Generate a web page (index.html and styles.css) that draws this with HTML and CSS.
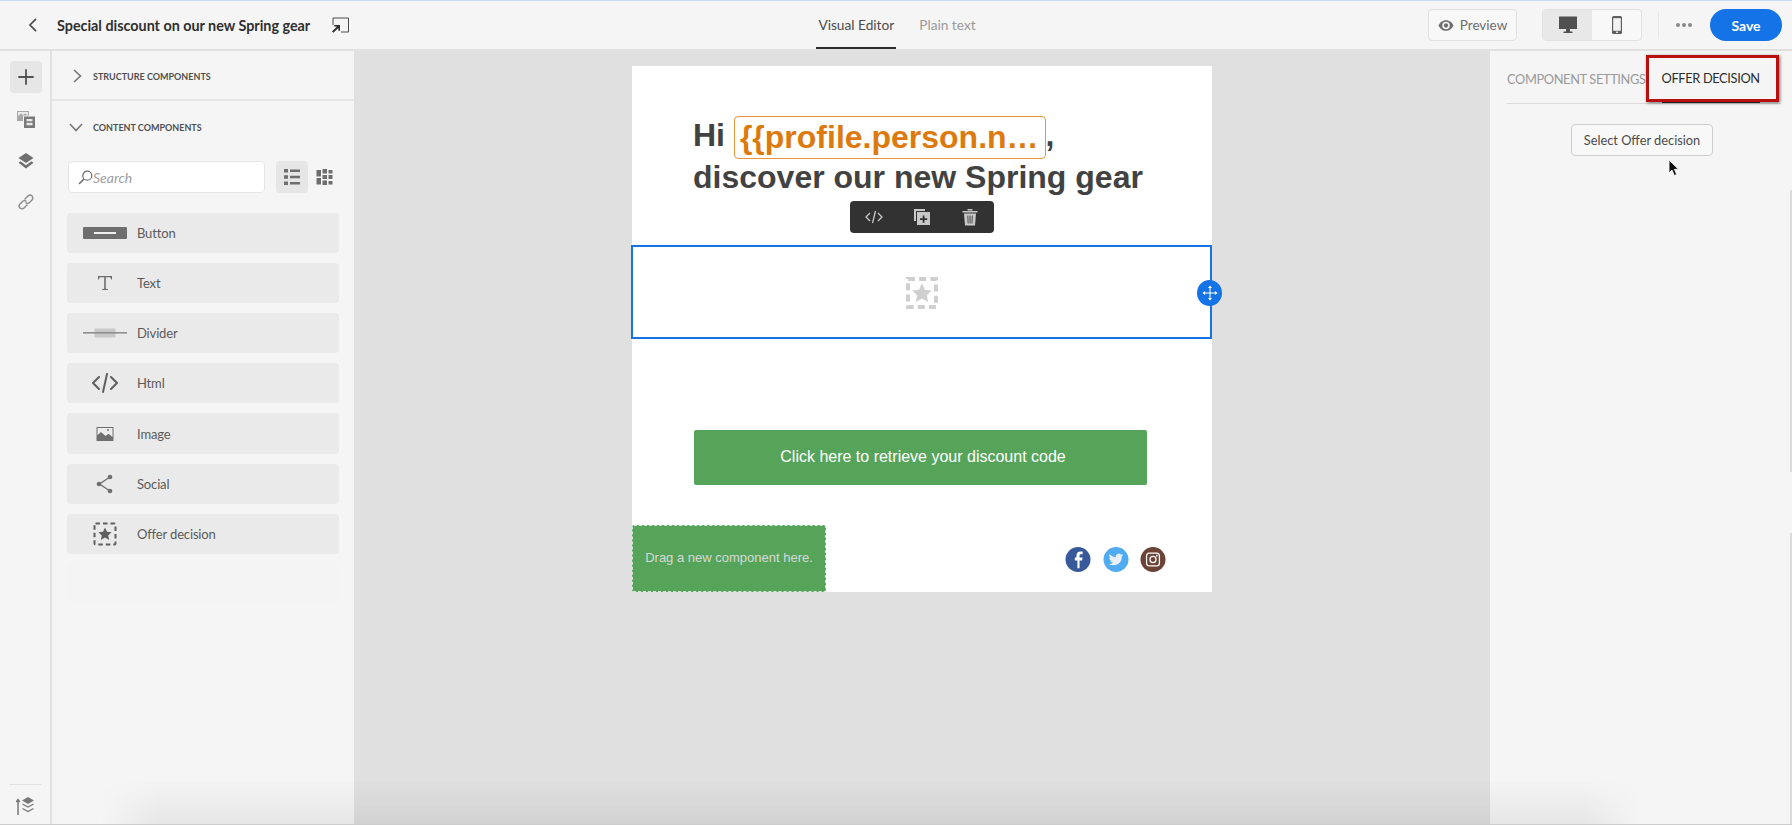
FILE: index.html
```html
<!DOCTYPE html>
<html lang="en">
<head>
<meta charset="utf-8">
<title>Special discount on our new Spring gear</title>
<link rel="stylesheet" href="styles.css">
</head>
<body>
<div class="app">
  <header class="topbar">
    <div class="top-left">
      <svg class="back" viewBox="0 0 10 16"><path d="M8.500 1.500 2 8l6.500 6.500" fill="none" stroke="#4b4b4b" stroke-width="2" stroke-linecap="round" stroke-linejoin="round"/></svg>
      <span class="title">Special discount on our new Spring gear</span>
      <svg class="open" viewBox="0 0 17 16"><path d="M1 8V1h15.500v14H9" fill="none" stroke="#4b4b4b" stroke-width="1"/><path d="M1.300 15.800 0 14.500l5-5H2.200V8H8v5.800H6.400V11z" fill="#2c2c2c"/></svg>
    </div>
    <nav class="modes">
      <span class="mode active">Visual Editor</span>
      <span class="mode">Plain text</span>
    </nav>
    <div class="top-right">
      <button class="btn preview">
        <svg class="eye" viewBox="0 0 18 14"><path d="M9 1C5 1 2 3.700.6 7 2 10.300 5 13 9 13s7-2.700 8.400-6C16 3.700 13 1 9 1zm0 10.200A4.200 4.200 0 1 1 9 2.800a4.200 4.200 0 0 1 0 8.400z" fill="#6e6e6e"/><circle cx="9" cy="7" r="2.400" fill="#6e6e6e"/></svg>
        Preview
      </button>
      <div class="devices">
        <span class="device on">
          <svg class="dev-icon" viewBox="0 0 18 18"><path d="M0 .5h18v12.500H0z" fill="#505050"/><path d="M7 13h4v2.500H7zM4.500 15.500h9V17h-9z" fill="#505050"/></svg>
        </span>
        <span class="device">
          <svg class="dev-icon" viewBox="0 0 18 18"><rect x="4" y="0" width="10" height="18" rx="1.500" fill="#606060"/><rect x="5.200" y="2.200" width="7.600" height="12.600" fill="#f2f2f2"/><rect x="8" y="15.600" width="2" height="1.300" fill="#f2f2f2"/></svg>
        </span>
      </div>
      <span class="sep"></span>
      <span class="more"><i></i><i></i><i></i></span>
      <button class="save">Save</button>
    </div>
  </header>

  <div class="main">
    <aside class="rail">
      <span class="rail-btn on">
        <svg class="rail-icon" viewBox="0 0 18 18"><path d="M9 2v14M2 9h14" stroke="#505050" stroke-width="1.800" stroke-linecap="round"/></svg>
      </span>
      <span class="rail-btn">
        <svg class="rail-icon" viewBox="0 0 18 18"><path d="M0 0h12v10H0z" fill="#a8a8a8"/><path d="M1 1h10v3.500L8 2.500 6 4 4 2.500 1 5z" fill="#ececec"/><path d="M6 4.500h12V17H6z" fill="#f5f5f5"/><path d="M7 5.500h11V17H7z" fill="#7a7a7a"/><path d="M9.500 8h6v2.300h-6zM9.500 11.800h6v2.500h-6z" fill="#e8e8e8"/></svg>
      </span>
      <span class="rail-btn">
        <svg class="rail-icon" viewBox="0 0 18 18"><path d="M9 1l7.500 5L9 11 1.500 6z" fill="#6e6e6e"/><path d="M3.500 9.300 1.500 10.800 9 16.500l7.500-5.700-2-1.500L9 13.300z" fill="#6e6e6e"/></svg>
      </span>
      <span class="rail-btn">
        <svg class="rail-icon" viewBox="0 0 18 18"><g fill="none" stroke="#8a8a8a" stroke-width="1.400"><path d="M7.500 6.500 11 3a2.800 2.800 0 0 1 4 4l-2.500 2.500a2.800 2.800 0 0 1-4 0"/><path d="M10.500 11.500 7 15a2.800 2.800 0 0 1-4-4l2.500-2.500a2.800 2.800 0 0 1 4 0"/></g></svg>
      </span>
      <span class="rail-fill"></span>
      <span class="rail-rule"></span>
      <svg class="rail-foot" viewBox="0 0 18 18"><path d="M2 18V4M.2 5 2 2.500 3.800 5" fill="none" stroke="#7a7a7a" stroke-width="1.500"/><path d="M12 0l6 3.500-6 3.500-6-3.500z" fill="#7a7a7a"/><path d="M6.500 7l5.500 3 5.500-3M6.500 11.500l5.500 3 5.500-3" fill="none" stroke="#7a7a7a" stroke-width="1.400"/></svg>
    </aside>

    <section class="panel">
      <div class="acc closed">
        <svg class="chev" viewBox="0 0 10 14"><path d="M2 1 8.500 7 2 13" fill="none" stroke="#7a7a7a" stroke-width="1.700"/></svg>
        <span class="acc-label">STRUCTURE COMPONENTS</span>
      </div>
      <div class="acc open-acc">
        <svg class="chev-d" viewBox="0 0 14 10"><path d="M1 2 7 8.500 13 2" fill="none" stroke="#7a7a7a" stroke-width="1.700"/></svg>
        <span class="acc-label">CONTENT COMPONENTS</span>
      </div>
      <div class="tools">
        <div class="search">
          <svg class="lens" viewBox="0 0 15 15"><circle cx="9.300" cy="5.700" r="4.500" fill="none" stroke="#6e6e6e" stroke-width="1.200"/><path d="M6 9 1 14" stroke="#6e6e6e" stroke-width="1.600"/></svg>
          <span>Search</span>
        </div>
        <span class="view on">
          <svg class="view-icon" viewBox="0 0 16 16"><path d="M0 0h4v3.500H0zM6 .5h10v2.500H6zM0 6.200h4v3.500H0zM6 6.700h10v2.500H6zM0 12.500h4V16H0zM6 13h10v2.500H6z" fill="#6e6e6e"/></svg>
        </span>
        <svg class="view-icon grid-icon" viewBox="0 0 16 16"><path d="M0 1h4.500v6.500H0zM0 9h4.500v6.500H0zM6 0h4.500v4.500H6zM6 6h4.500v4H6zM6 11.500h4.500V16H6zM12 1h4v3.500h-4zM12 6h4v4h-4zM12 12h4v3.500h-4z" fill="#6e6e6e"/></svg>
      </div>
      <ul class="items">
        <li class="item">
          <span class="item-icon"><svg class="ic-wide" viewBox="0 0 44 12"><rect width="44" height="12" rx="1" fill="#6e6e6e"/><rect x="11" y="5" width="22" height="2" fill="#f0f0f0"/></svg></span>
          <span>Button</span>
        </li>
        <li class="item">
          <span class="item-icon"><svg class="ic" viewBox="0 0 24 24"><path d="M5 8.500V5h14v3.500h-.9c-.1-1.500-.6-2.300-2-2.300h-3.300v11.600l2.200.5v.7H9v-.7l2.200-.5V6.200H7.900c-1.400 0-1.900.8-2 2.300z" fill="#6e6e6e"/></svg></span>
          <span>Text</span>
        </li>
        <li class="item">
          <span class="item-icon"><svg class="ic-wide" viewBox="0 0 44 12"><rect x="11.500" y="1.500" width="21" height="9" rx="1" fill="#c8c8c8"/><rect y="5" width="44" height="1.600" fill="#8e8e8e"/></svg></span>
          <span>Divider</span>
        </li>
        <li class="item">
          <span class="item-icon"><svg class="ic-code" viewBox="0 0 28 20"><path d="M8 4 2 10l6 6M20 4l6 6-6 6M16 1l-4 18" fill="none" stroke="#5f5f5f" stroke-width="2" stroke-linecap="round" stroke-linejoin="round"/></svg></span>
          <span>Html</span>
        </li>
        <li class="item tall">
          <span class="item-icon"><svg class="ic" viewBox="0 0 24 24"><path d="M3.500 5h17v14h-17z" fill="#6e6e6e"/><path d="M4.500 6h15v9l-4-3.200-3 2.200-4.500-4-3.500 3.300z" fill="#ececec"/><circle cx="15" cy="8" r="1" fill="#6e6e6e"/></svg></span>
          <span>Image</span>
        </li>
        <li class="item">
          <span class="item-icon"><svg class="ic" viewBox="0 0 24 24"><path d="M17 5 6.500 12 17 19" fill="none" stroke="#6e6e6e" stroke-width="1.300"/><circle cx="17" cy="5" r="2.300" fill="#6e6e6e"/><circle cx="6" cy="12" r="2.300" fill="#6e6e6e"/><circle cx="17" cy="19" r="2.300" fill="#6e6e6e"/></svg></span>
          <span>Social</span>
        </li>
        <li class="item">
          <span class="item-icon"><svg class="ic" viewBox="0 0 24 24"><rect x="1.500" y="1.500" width="21" height="21" rx="1" fill="none" stroke="#5f5f5f" stroke-width="2" stroke-dasharray="4.500 3"/><path d="M12 5.500l2 4.300 4.600.5-3.400 3.100 1 4.600-4.200-2.400-4.200 2.400 1-4.600-3.400-3.100 4.600-.5z" fill="#5f5f5f"/></svg></span>
          <span>Offer decision</span>
        </li>
      </ul>
      <div class="ghost"></div>
    </section>

    <main class="canvas">
      <article class="email">
        <h1 class="headline">Hi <span class="token">{{profile.person.n…</span>,<br>discover our new Spring gear</h1>
        <div class="selected">
          <div class="toolbar">
            <span class="tb"><svg class="tb-icon" viewBox="0 0 18 18"><path d="M5 5 1 9l4 4M13 5l4 4-4 4M10.500 3l-3 12" fill="none" stroke="#c8c8c8" stroke-width="1.300"/></svg></span>
            <span class="tb"><svg class="tb-icon" viewBox="0 0 18 18"><path d="M1 1h11v2H3v10H1z" fill="#c8c8c8"/><path d="M4 4h13v13H4z" fill="#c8c8c8"/><path d="M9.700 7.500h1.800v2.700h2.700V12h-2.700v2.700H9.700V12H7v-1.800h2.700z" fill="#323232"/></svg></span>
            <span class="tb"><svg class="tb-icon" viewBox="0 0 18 18"><path d="M1.500 3h15v1.600h-15zM6.500 1h5v1.500h-5z" fill="#c8c8c8"/><path d="M3 5.500h12l-1 12H4z" fill="#c8c8c8"/><path d="M6.400 7.500h.9l.2 8h-.8zM8.600 7.500h.9v8h-.9zM10.800 7.500h.9l-.3 8h-.8z" fill="#323232"/></svg></span>
          </div>
          <svg class="placeholder" viewBox="0 0 32 32"><rect x="2" y="2" width="28" height="28" fill="none" stroke="#cfcfcf" stroke-width="4" stroke-dasharray="7 4.200"/><path d="M16 6.500l3 6.300 6.800.8-5 4.700 1.400 6.800-6.200-3.500-6.200 3.500 1.400-6.800-5-4.700 6.800-.8z" fill="#cfcfcf"/></svg>
          <span class="handle">
            <svg class="handle-icon" viewBox="0 0 18 18"><path d="M9 2v14M2 9h14" stroke="#fff" stroke-width="1.200"/><path d="M9 .5 6.800 3.500h4.400zM9 17.500l-2.200-3h4.400zM.5 9l3-2.200v4.400zM17.500 9l-3-2.200v4.400z" fill="#fff"/></svg>
          </span>
        </div>
        <a class="cta">Click here to retrieve your discount code</a>
        <div class="email-foot">
          <div class="dropzone">Drag a new component here.</div>
          <div class="socials">
            <svg class="soc" viewBox="0 0 26 26"><circle cx="13" cy="13" r="13" fill="#36599a"/><path d="M14.600 22v-8h2.700l.4-3h-3.100V9c0-.9.300-1.500 1.500-1.500h1.700V4.800c-.3 0-1.300-.1-2.400-.1-2.400 0-4 1.400-4 4.100V11H9.700v3h2.700v8z" fill="#fff"/></svg>
            <svg class="soc" viewBox="0 0 26 26"><circle cx="13" cy="13" r="13" fill="#50abf1"/><path d="M20.500 8.300c-.6.300-1.200.4-1.800.5.600-.4 1.100-1 1.400-1.700-.6.400-1.300.6-2 .8a3.100 3.100 0 0 0-5.300 2.800C10.200 10.600 7.900 9.300 6.400 7.400c-.8 1.400-.4 3.200 1 4.100-.5 0-1-.2-1.400-.4 0 1.500 1.100 2.800 2.500 3.100-.5.100-.9.100-1.400 0 .4 1.200 1.500 2.100 2.900 2.100A6.300 6.300 0 0 1 5.500 17.600c5 3.100 14 .9 13.500-8 .6-.4 1.100-.8 1.500-1.300z" fill="#e8f0f5"/></svg>
            <svg class="soc" viewBox="0 0 26 26"><circle cx="13" cy="13" r="13" fill="#6b4437"/><rect x="6.300" y="6.300" width="13.400" height="13.400" rx="3" fill="none" stroke="#fff" stroke-width="1.300"/><circle cx="13" cy="13" r="3.200" fill="none" stroke="#fff" stroke-width="1.300"/><circle cx="17" cy="9" r=".9" fill="#fff"/></svg>
          </div>
        </div>
      </article>
    </main>

    <aside class="settings">
      <div class="tabs">
        <span class="tab">COMPONENT SETTINGS</span>
        <span class="tab active">OFFER DECISION<span class="callout"></span></span>
      </div>
      <button class="btn select">Select Offer decision</button>
      <svg class="cursor" viewBox="0 0 12 18"><path d="M1 1v13l3-3 2.300 5.500 2.400-1L6.400 10.300H10.500z" fill="#111" stroke="#fff" stroke-width=".8"/></svg>
    </aside>
    <div class="edge-shade"></div>
  </div>
</div>
</body>
</html>
```
FILE: styles.css
```css
* { box-sizing: border-box; }
html, body { margin: 0; height: 100%; overflow: hidden; }
body { font-family: "Lato", "Noto Sans", sans-serif; color: #4b4b4b; background: #f5f5f5; }
svg { display: block; flex: none; }
button { font-family: inherit; }

.app { height: 825px; display: flex; flex-direction: column; border-bottom: 1px solid #cdcdcd; }

.topbar { height: 51px; flex: none; display: grid; grid-template-columns: 1fr auto 1fr; align-items: center; background: #f5f5f5; border-top: 1px solid #c6dcf5; border-bottom: 2px solid #e1e1e1; }
.top-left { display: flex; align-items: center; padding-left: 28px; }
.back { width: 9px; height: 14px; }
.title { margin-left: 20px; font-size: 14.35px; font-weight: 700; color: #2f2f2f; white-space: nowrap; }
.open { width: 17px; height: 16px; margin-left: 22px; }
.modes { display: flex; height: 100%; gap: 21px; margin-left: 2px; }
.mode { display: flex; align-items: center; height: 48px; padding: 0 2px; font-size: 13.7px; color: #9a9a9a; border-bottom: 2px solid transparent; }
.mode.active { color: #4b4b4b; border-bottom-color: #2c2c2c; }
.top-right { display: flex; align-items: center; justify-content: flex-end; padding-right: 10px; }
.btn { display: flex; align-items: center; justify-content: center; background: #f8f8f8; border: 1px solid #e1e1e1; border-radius: 4px; color: #6e6e6e; }
.preview { width: 89px; height: 32px; gap: 6px; font-size: 13.5px; }
.eye { width: 16px; height: 13px; }
.devices { display: flex; width: 100px; height: 32px; margin-left: 25px; background: #f8f8f8; border: 1px solid #e1e1e1; border-radius: 4px; overflow: hidden; }
.device { flex: 1; display: flex; align-items: center; justify-content: center; }
.device.on { background: #e8e8e8; }
.dev-icon { width: 18px; height: 18px; }
.sep { width: 1px; height: 27px; margin-left: 16px; background: #e8e8e8; }
.more { display: flex; gap: 2px; margin-left: 17px; }
.more i { width: 4px; height: 4px; border-radius: 50%; background: #8a8a8a; }
.save { width: 72px; height: 32px; margin-left: 18px; background: #1473e6; color: #fff; border: 0; border-radius: 16px; font-size: 14px; font-weight: 700; }

.main { position: relative; flex: 1; min-height: 0; display: flex; }

.rail { width: 52px; flex: none; display: flex; flex-direction: column; align-items: center; padding: 10px 0 9px; border-right: 2px solid #e1e1e1; }
.rail-btn { width: 32px; height: 32px; margin-bottom: 9px; margin-left: 1px; display: flex; align-items: center; justify-content: center; border-radius: 4px; }
.rail-btn.on { background: #e6e6e6; margin-bottom: 11px; }
.rail-icon { width: 18px; height: 18px; }
.rail-fill { flex: 1; }
.rail-rule { width: 32px; height: 1px; margin-bottom: 12px; background: #e1e1e1; }
.rail-foot { width: 18px; height: 18px; }

.panel { width: 302px; flex: none; display: flex; flex-direction: column; background: #f5f5f5; }
.acc { display: flex; align-items: center; height: 50px; padding-left: 20px; }
.closed { border-bottom: 2px solid #e6e6e6; padding-top: 2px; }
.open-acc { padding-left: 17px; margin-top: 1px; }
.chev { width: 10px; height: 14px; }
.chev-d { width: 14px; height: 10px; }
.acc-label { margin-left: 11px; font-size: 9px; font-weight: 700; color: #505050; }
.open-acc .acc-label { margin-left: 10px; }
.tools { display: flex; align-items: center; margin: 9px 0 20px 16px; }
.search { width: 197px; height: 32px; display: flex; align-items: center; padding-left: 9px; background: #fff; border: 1px solid #e6e6e6; border-radius: 4px; color: #a0a0a0; font-size: 14px; font-style: italic; }
.lens { width: 15px; height: 15px; }
.view { width: 32px; height: 32px; margin-left: 11px; display: flex; align-items: center; justify-content: center; background: #e6e6e6; border-radius: 4px; }
.view-icon { width: 16px; height: 16px; }
.grid-icon { width: 17px; margin-left: 8px; }
.items { list-style: none; margin: 0 0 0 15px; padding: 0; width: 272px; display: flex; flex-direction: column; gap: 10px; }
.item { height: 40px; display: flex; align-items: center; background: #eaeaea; border-radius: 4px; font-size: 13px; letter-spacing: -.15px; color: #5a5a5a; }
.item.tall { height: 41px; }
.item-icon { width: 70px; display: flex; justify-content: center; padding-left: 6px; }
.ic { width: 24px; height: 24px; }
.ic-wide { width: 44px; height: 12px; }
.ic-code { width: 28px; height: 20px; }
.ghost { width: 272px; height: 40px; margin: 9px 0 0 15px; background: #f4f4f4; border-radius: 4px; }

.canvas { flex: 1; min-width: 0; display: flex; justify-content: center; padding-top: 15px; background: #e0e0e0; }
.email { width: 580px; height: 526px; background: #fff; display: flex; flex-direction: column; }
.headline { margin: 0; padding: 49px 0 0 61px; height: 179px; font-family: "Liberation Sans", Arial, sans-serif; font-size: 32px; line-height: 41px; font-weight: 700; color: #424242; white-space: nowrap; }
.token { display: inline-block; height: 43px; line-height: 41px; padding: 0 6px 0 5px; vertical-align: -2px; margin-bottom: -2px; border: 1px solid #e8953a; border-radius: 4px; color: #dd7a0d; }

.selected { position: relative; width: 581px; height: 94px; margin-left: -1px; padding-top: 2px; display: flex; align-items: center; justify-content: center; border: 2px solid #1473e6; }
.toolbar { position: absolute; left: 217px; top: -46px; width: 144px; height: 32px; display: flex; align-items: center; background: #323232; border-radius: 4px; }
.tb { flex: 1; display: flex; justify-content: center; }
.tb-icon { width: 18px; height: 18px; }
.placeholder { width: 32px; height: 32px; }
.handle { position: absolute; right: -12px; top: 33px; width: 25px; height: 26px; display: flex; align-items: center; justify-content: center; background: #1473e6; border-radius: 50%; }
.handle-icon { width: 16px; height: 16px; }

.cta { width: 453px; height: 55px; margin: 91px 0 0 62px; padding: 0 0 2px 5px; flex: none; display: flex; align-items: center; justify-content: center; background: #55a45a; border-radius: 2px; color: #fff; font-family: "Liberation Sans", Arial, sans-serif; font-size: 16px; }
.email-foot { display: flex; margin-top: 40px; height: 67px; }
.dropzone { width: 194px; padding: 0 0 2px 0; display: flex; align-items: center; justify-content: center; background: #55a45a; border: 1px dashed #d8e8d8; border-radius: 2px; color: #d8d8d8; font-family: "Liberation Sans", Arial, sans-serif; font-size: 13px; }
.socials { display: flex; gap: 11.500px; margin: 22px 0 0 239px; }
.soc { width: 26px; height: 25px; }

.settings { position: relative; width: 302px; flex: none; padding: 0 11px 0 17px; background: linear-gradient(to bottom, transparent 139px, #dcdcdc 139px, #dcdcdc 421px, transparent 421px, transparent 482px, #dcdcdc 482px) right top / 2px 100% no-repeat, #f5f5f5; }
.tabs { display: flex; height: 53px; border-bottom: 1px solid #dcdcdc; }
.tab { position: relative; display: flex; align-items: center; height: 52px; padding-top: 4px; font-size: 12.8px; letter-spacing: -.35px; color: #9a9a9a; white-space: nowrap; }
.tab.active { margin-left: 16px; color: #2c2c2c; border-bottom: 2px solid #2c2c2c; }
.callout { position: absolute; left: -16px; right: -19px; top: 4px; bottom: -1px; border: 3px solid #b8100f; box-shadow: 1px 1px 3px rgba(0,0,0,.55); }
.select { width: 142px; height: 32px; margin: 20px 0 0 64px; font-size: 12.8px; color: #4b4b4b; border-color: #cfcfcf; }
.cursor { position: absolute; left: 178px; top: 108px; width: 12px; height: 18px; }

.edge-shade { position: absolute; left: 100px; right: 150px; bottom: 0; height: 45px; pointer-events: none; background: linear-gradient(to bottom, rgba(0,0,0,0), rgba(0,0,0,.06)); -webkit-mask-image: linear-gradient(to right, transparent, #000 60px, #000 calc(100% - 60px), transparent); mask-image: linear-gradient(to right, transparent, #000 60px, #000 calc(100% - 60px), transparent); }
```
